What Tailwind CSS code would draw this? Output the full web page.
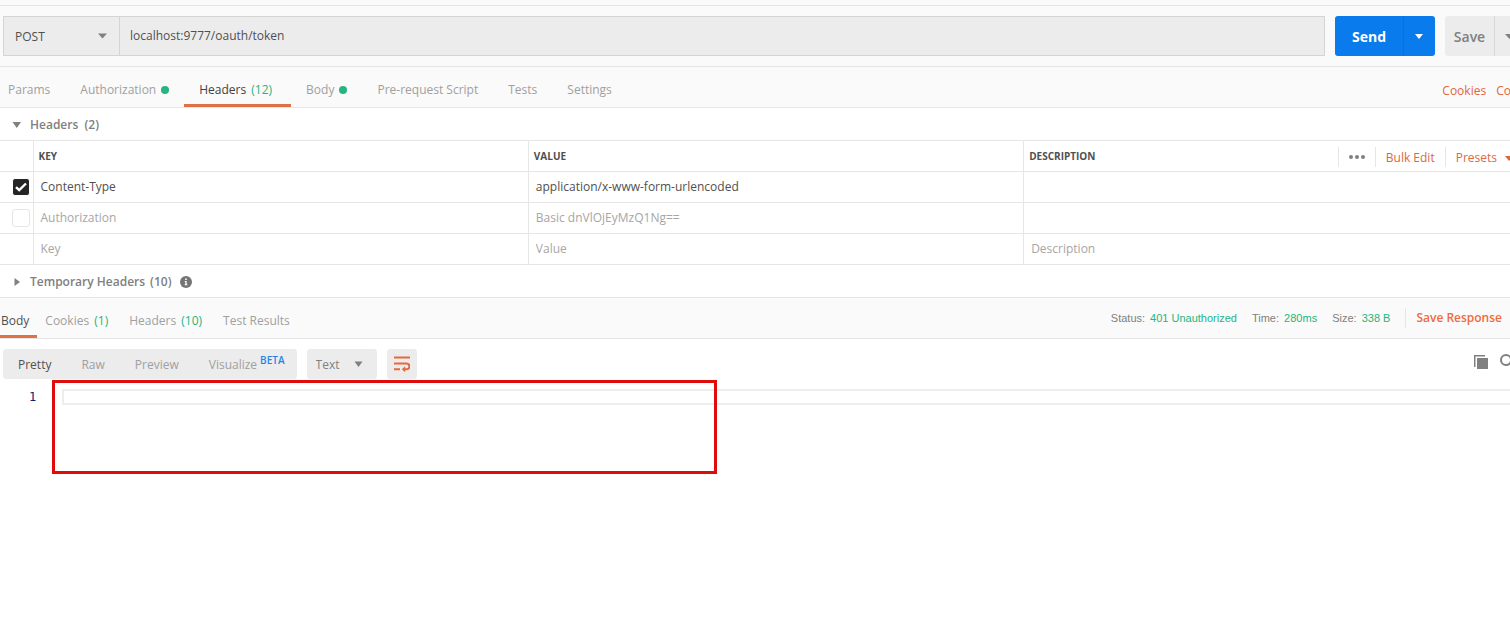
<!DOCTYPE html>
<html lang="en">
<head>
<meta charset="utf-8">
<meta name="viewport" content="width=device-width, initial-scale=1">
<title>API request</title>
<script src="https://cdn.jsdelivr.net/npm/@tailwindcss/browser@4"></script>
</head>
<body class="min-h-screen overflow-hidden bg-white font-['Open_Sans',sans-serif] text-xs text-[#505050]">
<main class="-mr-6">
  <div class="h-1.5 border-b border-[#e4e4e4] bg-[#fafafa]"></div>

  <!-- Request line -->
  <form class="flex items-start border-b border-[#e6e6e6] bg-[#fafafa] pt-2.5 pr-2 pb-2.5 pl-[3px]">
    <div class="flex h-10 min-w-0 flex-1 border border-[#d4d4d4] bg-[#ececec]">
      <div class="relative w-[116px] shrink-0 border-r border-[#d4d4d4]">
        <select aria-label="Method" class="h-full w-full appearance-none bg-transparent pt-[2px] pl-[11px] font-medium text-[#505050] outline-none"><option>POST</option><option>GET</option></select>
        <svg class="pointer-events-none absolute top-4 right-3 h-[6px] w-[9px] fill-[#808080]" viewBox="0 0 9 6"><path d="M0 .5h9L4.500 5.500z"/></svg>
      </div>
      <input aria-label="Request URL" value="localhost:9777/oauth/token" class="min-w-0 flex-1 bg-transparent px-2.5 text-[#505050] outline-none">
    </div>
    <div class="ml-2.5 flex h-10 shrink-0 overflow-hidden rounded-[3px] bg-[#097bed] text-white">
      <button type="button" class="w-[69px] border-r border-[#0a70da] pt-[2px] text-sm font-bold">Send</button>
      <button type="button" aria-label="Send options" class="flex w-[31px] items-center pl-[11px]"><svg class="h-[5px] w-2 fill-white" viewBox="0 0 8 5"><path d="M0 0h8L4 5z"/></svg></button>
    </div>
    <div class="ml-2.5 flex h-10 shrink-0 overflow-hidden rounded-[3px] bg-[#ececec] text-[#808080]">
      <button type="button" class="w-[50px] border-r border-[#d9d9d9] pt-[2px] text-sm font-semibold">Save</button>
      <button type="button" aria-label="Save options" class="flex w-[31px] items-center pl-2.5"><svg class="h-[5px] w-[9px] fill-[#808080]" viewBox="0 0 9 5"><path d="M0 0h9L4.500 5z"/></svg></button>
    </div>
  </form>

  <!-- Request tabs -->
  <div class="flex h-[41px] items-stretch justify-between border-b border-[#e6e6e6] bg-[#fafafa]">
    <nav class="flex text-[#a0a0a0]">
      <button type="button" class="pt-[6px] pr-[15px] pl-2">Params</button>
      <button type="button" class="flex items-center gap-[5px] px-[15px] pt-[6px]">Authorization<span class="size-2 rounded-full bg-[#26b47f]"></span></button>
      <button type="button" class="border-b-3 border-[#de7147] pt-[9px] pr-[19px] pl-[15px] text-[#404040]">Headers <span class="ml-[2px] text-[#26b47f]">(12)</span></button>
      <button type="button" class="flex items-center gap-[5px] px-[15px] pt-[6px]">Body<span class="size-2 rounded-full bg-[#26b47f]"></span></button>
      <button type="button" class="px-[15px] pt-[6px]">Pre-request Script</button>
      <button type="button" class="px-[15px] pt-[6px]">Tests</button>
      <button type="button" class="px-[15px] pt-[6px]">Settings</button>
    </nav>
    <div class="flex gap-2.5 pt-2 pr-[9px] text-[#e0673c]">
      <button type="button">Cookies</button>
      <button type="button">Code</button>
    </div>
  </div>

  <!-- Headers editor -->
  <section>
    <h2><button type="button" class="flex h-8 w-full items-center gap-2 pt-[2px] pl-3 font-semibold text-[#808080]"><svg class="h-[6px] w-2.5 fill-[#808080]" viewBox="0 0 10 6"><path d="M.5 0h8.500L4.800 6z"/></svg><span>Headers&nbsp; (2)</span></button></h2>
    <div class="pr-[15px]">
      <table class="w-full table-fixed border-collapse border-y border-[#e6e6e6] text-left [&_tr]:h-[31px] [&_tr]:border-b [&_tr]:border-[#e6e6e6] [&_td+td]:border-l [&_td+td]:border-[#e6e6e6] [&_th+th]:border-l [&_th+th]:border-[#e6e6e6]">
        <colgroup><col class="w-[33px]"><col><col><col></colgroup>
        <thead>
          <tr class="text-[10px] font-bold">
            <th></th>
            <th class="pt-[2px] pl-[5px]">KEY</th>
            <th class="pt-[2px] pl-[5px]">VALUE</th>
            <th class="pt-[2px] pl-[5px]">
              <div class="flex items-center justify-between">
                <span>DESCRIPTION</span>
                <div class="flex h-5 items-center text-xs font-normal text-[#e0673c]">
                  <button type="button" aria-label="More options" class="flex h-5 w-[37px] items-center justify-center gap-[2px] border-l border-[#e6e6e6] [&>i]:size-1 [&>i]:rounded-full [&>i]:bg-[#808080]"><i></i><i></i><i></i></button>
                  <button type="button" class="h-5 border-l border-[#e6e6e6] px-2.5 pt-[2px]">Bulk Edit</button>
                  <button type="button" class="flex h-5 items-center gap-2 border-l border-[#e6e6e6] pt-[2px] pr-1.5 pl-2.5">Presets<svg class="h-[5px] w-2 fill-[#e0673c]" viewBox="0 0 8 5"><path d="M0 0h8L4 5z"/></svg></button>
                </div>
              </div>
            </th>
          </tr>
        </thead>
        <tbody>
          <tr>
            <td class="pl-3"><label class="relative block size-[18px]"><input type="checkbox" checked aria-label="Enable Content-Type" class="peer block size-[18px] appearance-none rounded-[3px] border border-[#e6e6e6] checked:border-white checked:bg-[#252525]"><svg class="pointer-events-none absolute inset-0 hidden size-[18px] peer-checked:block" viewBox="0 0 18 18" fill="none" stroke="#fff" stroke-width="2.400"><path d="M4 9.200l3.200 3L14 5.500"/></svg></label></td>
            <td class="pl-[7px]">Content-Type</td>
            <td class="pl-[7px]">application/x-www-form-urlencoded</td>
            <td></td>
          </tr>
          <tr class="text-[#a6a6a6]">
            <td class="pl-3"><input type="checkbox" aria-label="Enable Authorization" class="block size-[18px] appearance-none rounded-[3px] border border-[#e6e6e6] checked:bg-[#252525]"></td>
            <td class="pl-[7px]">Authorization</td>
            <td class="pl-[7px]">Basic dnVlOjEyMzQ1Ng==</td>
            <td></td>
          </tr>
          <tr>
            <td></td>
            <td class="pl-[7px]"><input aria-label="Key" placeholder="Key" class="block w-full outline-none placeholder:text-[#a6a6a6]"></td>
            <td class="pl-[7px]"><input aria-label="Value" placeholder="Value" class="block w-full outline-none placeholder:text-[#a6a6a6]"></td>
            <td class="pl-[7px]"><input aria-label="Description" placeholder="Description" class="block w-full outline-none placeholder:text-[#a6a6a6]"></td>
          </tr>
        </tbody>
      </table>
    </div>
    <h2><button type="button" class="flex h-8 w-full items-center pt-[2px] pl-3.5 font-semibold text-[#808080]"><svg class="mr-2.5 h-2 w-[6px] fill-[#808080]" viewBox="0 0 6 8"><path d="M.5 0v8L6 4z"/></svg><span>Temporary Headers</span><span class="ml-[5px]">(10)</span><svg class="ml-[9px] size-3" viewBox="0 0 12 12"><circle cx="6" cy="6" r="6" fill="#757575"/><path d="M5.200 2.500h1.600V4H5.200zM4.700 5h2v3.300h.7v1H4.600v-1h.7V6h-.6z" fill="#fff"/></svg></button></h2>
  </section>

  <!-- Response bar -->
  <section>
    <div class="flex h-[42px] justify-between border-y border-[#e6e6e6] bg-[#fafafa]">
      <nav class="flex text-[#a0a0a0]">
        <button type="button" class="border-b-3 border-[#de7147] pt-2 pr-2 pl-px text-[#505050]">Body</button>
        <button type="button" class="pt-[5px] pr-[11px] pl-2">Cookies <span class="ml-[2px] text-[#26b47f]">(1)</span></button>
        <button type="button" class="pt-[5px] pr-[11px] pl-2.5">Headers <span class="ml-[2px] text-[#26b47f]">(10)</span></button>
        <button type="button" class="px-2.5 pt-[5px]">Test Results</button>
      </nav>
      <div class="mr-8 flex h-10 items-center font-['Liberation_Sans',sans-serif] text-[11px] text-[#808080]">
        <span class="mr-[15px]">Status: <span class="ml-[2px] text-[#26b47f]">401 Unauthorized</span></span>
        <span class="mr-[15px]">Time: <span class="ml-[2px] text-[#26b47f]">280ms</span></span>
        <span class="mr-[15px]">Size: <span class="ml-[2px] text-[#26b47f]">338 B</span></span>
        <button type="button" class="h-5 border-l border-[#e6e6e6] pl-2.5 font-['Open_Sans',sans-serif] text-xs font-semibold text-[#f06a3d]">Save Response</button>
      </div>
    </div>

    <div class="flex h-[41px] items-start pt-2.5 pl-[3px] text-[#a0a0a0]">
      <div class="flex h-[30px] items-center rounded-[3px] bg-[#ececec] px-[15px] pt-[2px]">
        <button type="button" class="mr-[30px] text-[#505050]">Pretty</button>
        <button type="button" class="mr-[30px]">Raw</button>
        <button type="button" class="mr-[30px]">Preview</button>
        <button type="button" class="-mr-[3px] flex">Visualize<span class="-mt-[3px] ml-[3px] text-[10px] font-semibold text-[#1f86e8]">BETA</span></button>
      </div>
      <div class="relative ml-2.5 h-[30px] w-[70px] rounded-[3px] bg-[#ececec]">
        <select aria-label="Response format" class="h-full w-full appearance-none bg-transparent pt-[2px] pl-[9px] text-[#808080] outline-none"><option>Text</option><option>JSON</option></select>
        <svg class="pointer-events-none absolute top-3 right-3.5 h-[6px] w-[9px] fill-[#808080]" viewBox="0 0 9 6"><path d="M.5.500h8L4.500 6z"/></svg>
      </div>
      <button type="button" aria-label="Wrap lines" class="ml-2.5 flex size-[30px] items-center justify-center rounded-[3px] bg-[#ececec]"><svg class="size-4" viewBox="0 0 16 16" fill="none" stroke="#e8683a" stroke-width="2"><path d="M0 1.500h16M0 7.500h12.500a2.900 2.900 0 0 1 0 5.800H9M0 13.300h6"/><path d="M11.200 10.300v6L7.800 13.300z" fill="#e8683a" stroke="none"/></svg></button>
      <div class="mr-[18px] ml-auto flex items-center gap-3 pt-[5px]">
        <button type="button" aria-label="Copy"><svg class="block size-3.5 fill-[#808080]" viewBox="0 0 14 14"><path d="M0 0h11v1.500H1.500V12H0zM3 3h11v11H3z"/></svg></button>
        <button type="button" aria-label="Search"><svg class="block size-4" viewBox="0 0 16 16" fill="none" stroke="#808080" stroke-width="2"><circle cx="6" cy="6" r="5"/><path d="M9.600 9.600l5.400 5.400"/></svg></button>
      </div>
    </div>

    <div class="relative flex min-h-60 pt-[9px]">
      <div class="w-[62px] pl-[29px] font-['DejaVu_Sans_Mono',monospace] text-[#0b216f]">1</div>
      <div role="textbox" aria-label="Response body" aria-readonly="true" class="h-4 flex-1 border-2 border-[#eeeeee]"></div>
      <div class="pointer-events-none absolute top-0 left-[52px] h-[94px] w-[665px] border-3 border-[#e00b0b]"></div>
    </div>
  </section>
</main>
</body>
</html>
